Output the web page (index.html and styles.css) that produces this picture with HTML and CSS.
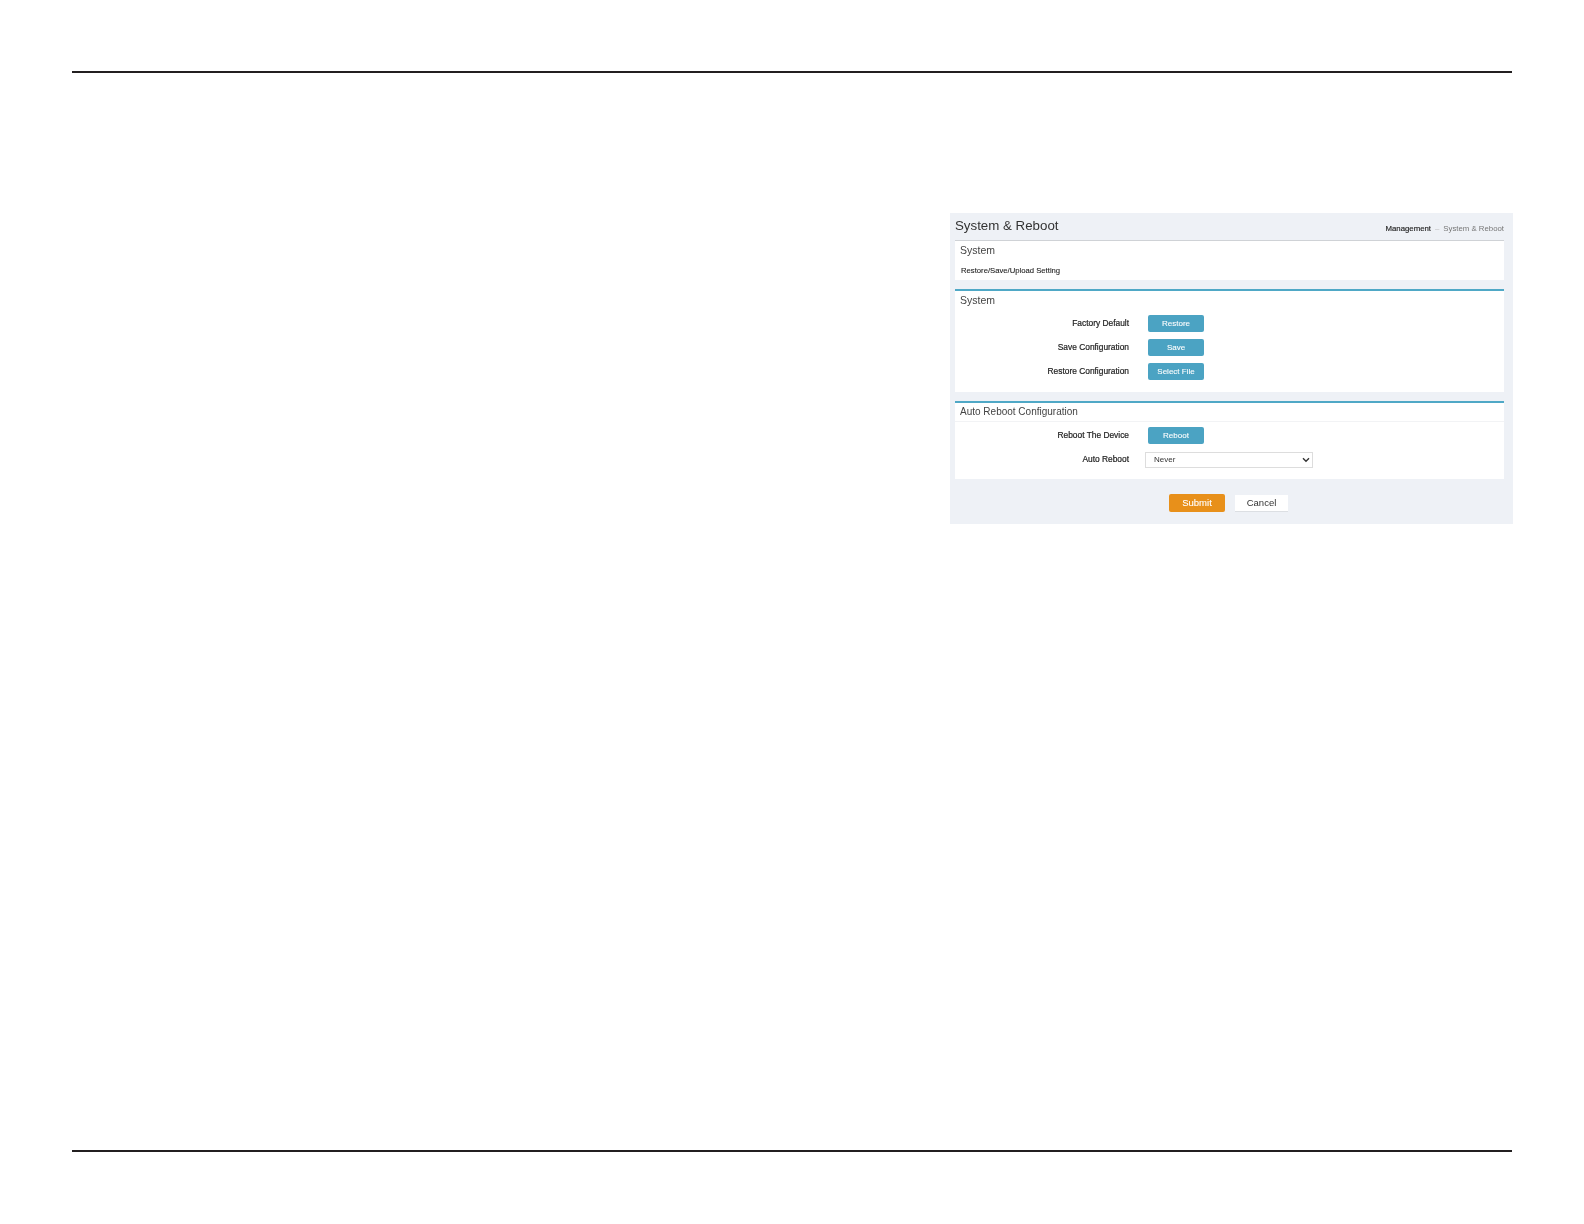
FILE: index.html
```html
<!DOCTYPE html>
<html lang="en">
<head>
<meta charset="utf-8">
<title>System &amp; Reboot</title>
<link rel="stylesheet" href="styles.css">
</head>
<body>
<div class="page">
  <hr class="rule">
  <main class="content">
    <section class="shot">
      <header class="shot-head">
        <h1 class="title">System &amp; Reboot</h1>
        <nav class="crumbs"><b class="crumb-root">Management</b><span class="crumb-sep">–</span><span>System &amp; Reboot</span></nav>
      </header>
      <div class="card card-intro">
        <h2 class="card-title">System</h2>
        <p class="intro">Restore/Save/Upload Setting</p>
      </div>
      <div class="card card-system">
        <h2 class="card-title">System</h2>
        <div class="rows">
          <div class="row"><span class="label">Factory Default</span><button class="btn">Restore</button></div>
          <div class="row"><span class="label">Save Configuration</span><button class="btn">Save</button></div>
          <div class="row"><span class="label">Restore Configuration</span><button class="btn">Select File</button></div>
        </div>
      </div>
      <div class="card card-auto">
        <h2 class="card-title card-title-ruled">Auto Reboot Configuration</h2>
        <div class="rows rows-auto">
          <div class="row"><span class="label">Reboot The Device</span><button class="btn">Reboot</button></div>
          <div class="row"><span class="label">Auto Reboot</span>
            <div class="select-wrap">
              <select class="select"><option>Never</option></select>
              <svg class="chevron" width="8" height="6" viewBox="0 0 8 6" aria-hidden="true"><path d="M1 1.2 4 4.2 7 1.2" fill="none" stroke="#333" stroke-width="1.4"/></svg>
            </div>
          </div>
        </div>
      </div>
      <div class="actions">
        <button class="btn-submit">Submit</button>
        <button class="btn-cancel">Cancel</button>
      </div>
    </section>
  </main>
  <hr class="rule rule-bottom">
</div>
</body>
</html>
```
FILE: styles.css
```css
* { box-sizing: border-box; }
html, body { margin: 0; padding: 0; background: #fff; }
body { font-family: "Liberation Sans", Arial, sans-serif; color: #222; }
.page { width: 1584px; height: 1224px; padding: 71px 72px 0; display: flex; flex-direction: column; }
.rule { margin: 0; border: 0; height: 2px; background: #231f20; flex: none; }
.rule-bottom { margin-top: auto; margin-bottom: 72px; }
.content { flex: none; display: flex; justify-content: flex-end; padding-top: 140px; margin-right: -1px; }
.shot { width: 563px; height: 311px; background: #eef1f6; padding: 0 9px 0 5px; filter: blur(0.4px); }
.shot-head { height: 28px; padding-bottom: 1px; display: flex; align-items: center; justify-content: space-between; border-bottom: 1px solid #cfd2d6; }
.title { margin: 0; font-size: 13.3px; font-weight: 400; color: #333; line-height: 1; }
.crumbs { font-size: 7.8px; color: #777; display: flex; gap: 4px; margin-top: 4px; }
.crumb-root { font-weight: 400; color: #222; -webkit-text-stroke: 0.15px #222; }
.crumb-sep { color: #bbb; }
.card { background: #fff; }
.card-title { margin: 0; font-size: 10.5px; font-weight: 400; color: #444; line-height: 12px; padding-left: 5px; }
.card-intro { height: 39px; padding-top: 3px; }
.intro { margin: 10px 0 0 6px; font-size: 7.7px; line-height: 10px; color: #222; -webkit-text-stroke: 0.1px #222; }
.card-system { margin-top: 9px; height: 103px; border-top: 2px solid #4fa8c6; padding-top: 3px; }
.card-auto { margin-top: 9px; height: 78px; border-top: 2px solid #4fa8c6; }
.card-title-ruled { height: 19px; padding-top: 3px; font-size: 10px; border-bottom: 1px solid #f2f3f5; }
.rows { display: flex; flex-direction: column; gap: 7px; margin-top: 9px; }
.rows-auto { margin-top: 5px; }
.row { display: flex; align-items: center; height: 17px; }
.label { width: 174px; margin-bottom: 2px; text-align: right; font-size: 8.4px; color: #222; font-weight: 400; -webkit-text-stroke: 0.2px #222; }
.btn { margin-left: 19px; width: 56px; height: 17px; padding: 0; border: 0; border-radius: 2px; background: #4ba3c3; color: #fff; font: 400 8px "Liberation Sans", Arial, sans-serif; -webkit-text-stroke: 0.1px #fff; }
.select-wrap { margin-left: 16px; width: 168px; height: 16px; position: relative; }
.select { appearance: none; display: block; width: 100%; height: 100%; padding: 0 0 0 8px; border: 1px solid #ddd; border-radius: 0; background: #fff; color: #333; font: 400 8px "Liberation Sans", Arial, sans-serif; }
.chevron { position: absolute; right: 3px; top: 5px; }
.actions { display: flex; gap: 10px; align-items: flex-start; padding: 15px 0 0 214px; }
.btn-submit { width: 56px; height: 18px; padding: 0 0 2px; border: 0; border-radius: 2px; background: #e8901a; color: #fff; font: 400 9.5px "Liberation Sans", Arial, sans-serif; -webkit-text-stroke: 0.1px #fff; }
.btn-cancel { width: 53px; height: 17px; margin-top: 1px; padding: 0 0 2px; border: 0; border-bottom: 1px solid #dcdfe3; background: #fff; color: #333; font: 400 9.5px "Liberation Sans", Arial, sans-serif; }
```
